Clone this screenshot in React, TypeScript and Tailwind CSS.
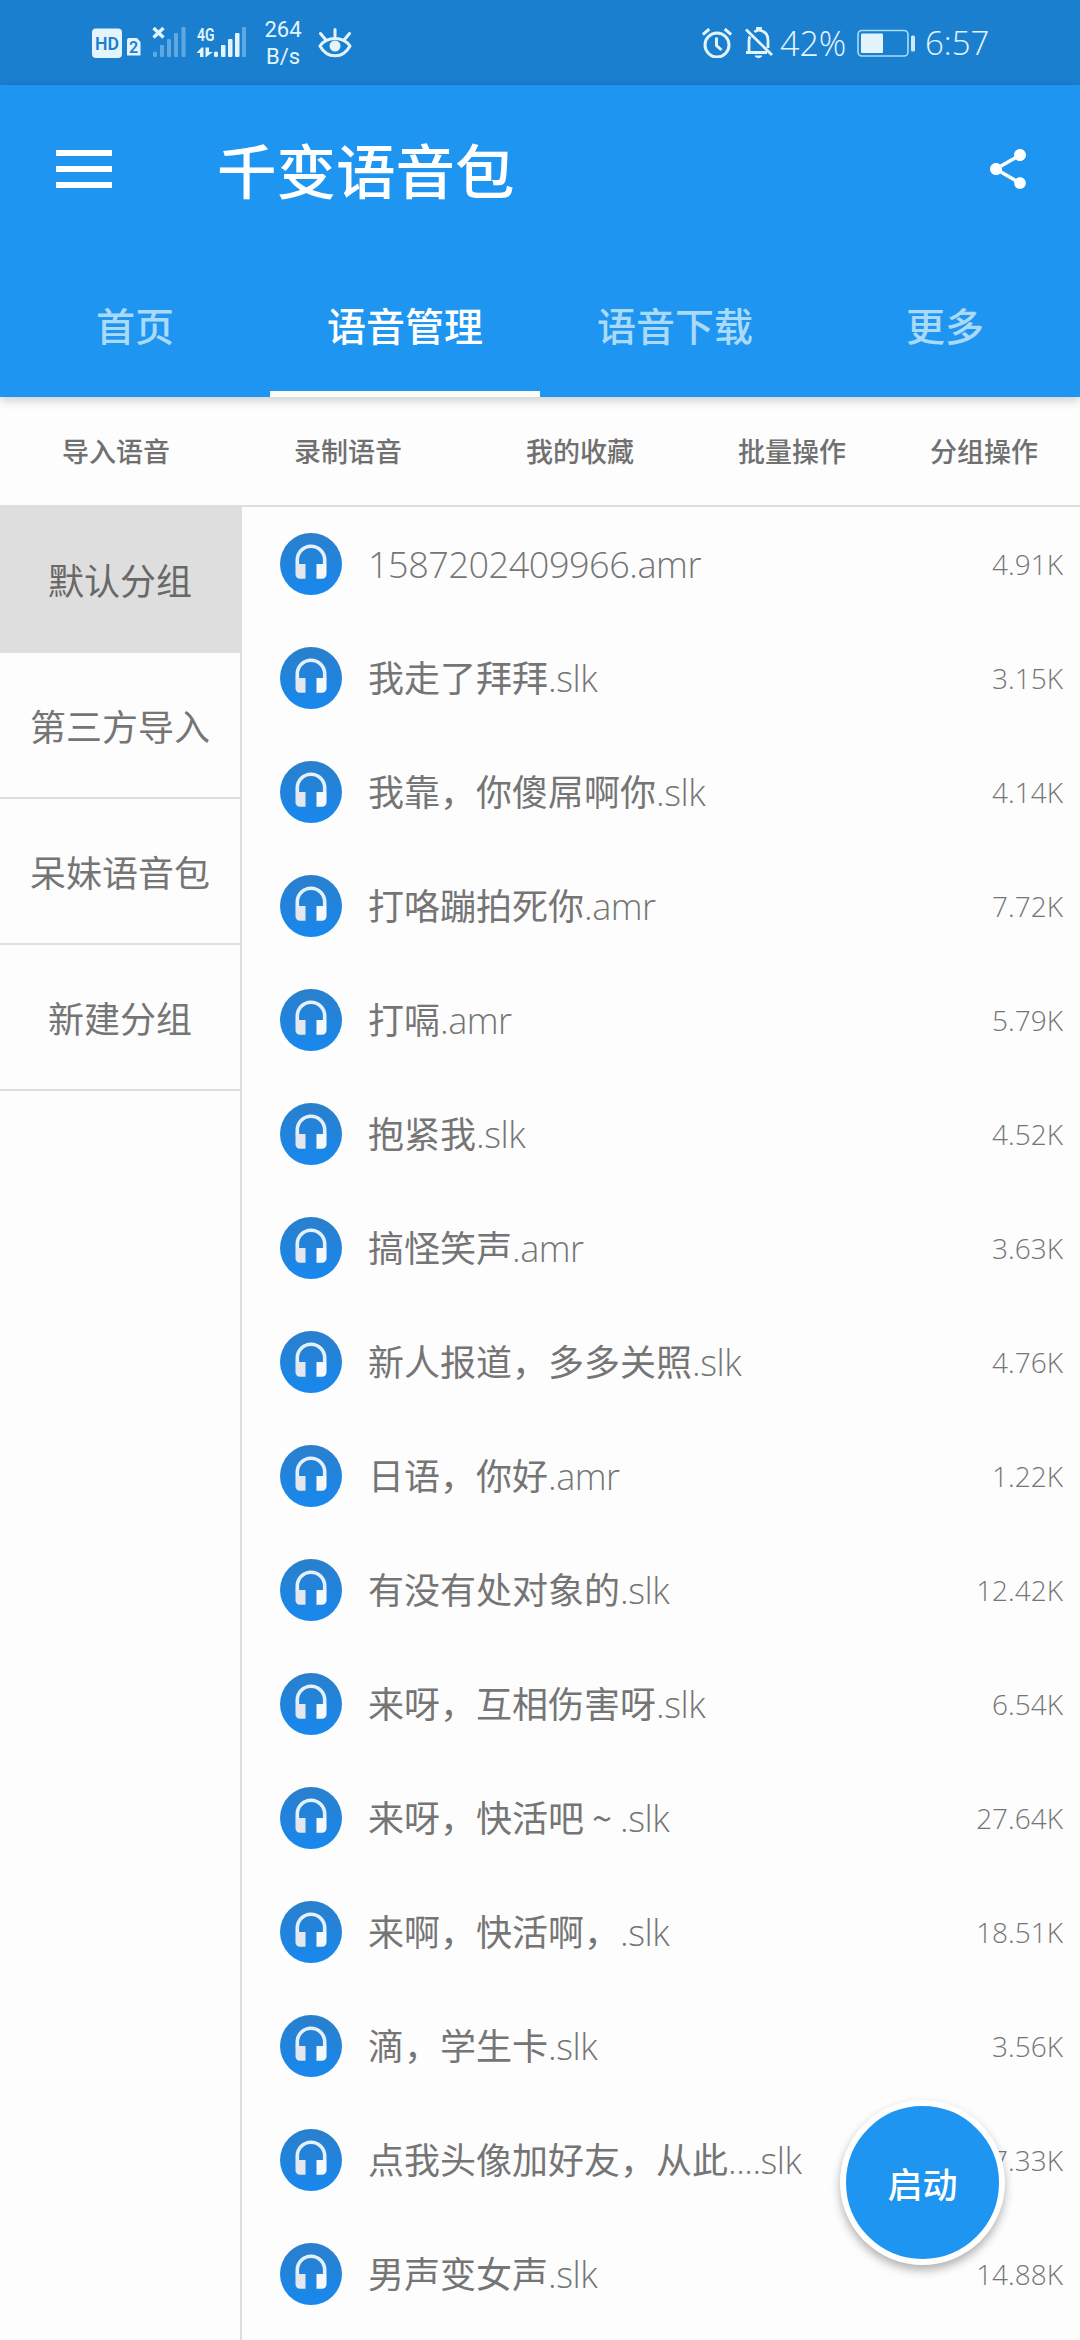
import React from 'react';
import { MdShare } from 'react-icons/md';

interface Voice {
  name: string;
  ext: string;
  size: string;
}

const tabs = ['首页', '语音管理', '语音下载', '更多'];

const actions = [
  { label: '导入语音', width: 'w-[232px]' },
  { label: '录制语音', width: 'w-[232px]' },
  { label: '我的收藏', width: 'w-[232px]' },
  { label: '批量操作', width: 'w-48' },
  { label: '分组操作', width: 'w-48' },
];

const groups = ['默认分组', '第三方导入', '呆妹语音包', '新建分组'];

const voices: Voice[] = [
  { name: '', ext: '1587202409966.amr', size: '4.91K' },
  { name: '我走了拜拜', ext: '.slk', size: '3.15K' },
  { name: '我靠，你傻屌啊你', ext: '.slk', size: '4.14K' },
  { name: '打咯蹦拍死你', ext: '.amr', size: '7.72K' },
  { name: '打嗝', ext: '.amr', size: '5.79K' },
  { name: '抱紧我', ext: '.slk', size: '4.52K' },
  { name: '搞怪笑声', ext: '.amr', size: '3.63K' },
  { name: '新人报道，多多关照', ext: '.slk', size: '4.76K' },
  { name: '日语，你好', ext: '.amr', size: '1.22K' },
  { name: '有没有处对象的', ext: '.slk', size: '12.42K' },
  { name: '来呀，互相伤害呀', ext: '.slk', size: '6.54K' },
  { name: '来呀，快活吧~', ext: '.slk', size: '27.64K' },
  { name: '来啊，快活啊，', ext: '.slk', size: '18.51K' },
  { name: '滴，学生卡', ext: '.slk', size: '3.56K' },
  { name: '点我头像加好友，从此', ext: '....slk', size: '7.33K' },
  { name: '男声变女声', ext: '.slk', size: '14.88K' },
];

const HeadsetIcon = () => (
  <svg viewBox="0 0 62 62" className="size-[62px] shrink-0">
    <defs>
      <linearGradient id="disc" x1="0" y1="0" x2="0" y2="1">
        <stop offset="0" stopColor="#2a7fcb" />
        <stop offset="1" stopColor="#1888ee" />
      </linearGradient>
    </defs>
    <circle cx="31" cy="31" r="31" fill="url(#disc)" />
    <path d="M17.300 31.500V27a13.700 13.700 0 0 1 27.400 0V31.500" fill="none" stroke="#e4f1fc" strokeWidth="3.600" />
    <path d="M15.500 31h10v14.700h-5.500a4.500 4.500 0 0 1-4.500-4.500z" fill="#e4e8ee" />
    <path d="M36.500 31h10v10.200a4.500 4.500 0 0 1-4.500 4.500h-5.500z" fill="#f6f9fc" />
  </svg>
);

const SignalIcons = () => (
  <svg viewBox="0 0 260 86" className="h-[86px] w-[260px]" fill="#e3f4fd">
    <rect x="92" y="28.5" width="30" height="29.5" rx="4" />
    <text x="107" y="50" textAnchor="middle" textLength="24" lengthAdjust="spacingAndGlyphs" fontSize="19" fontWeight="600" fontFamily="Roboto, sans-serif" fill="#1b7fd0">HD</text>
    <path d="M129 38h8l3.500 4v13.500h-13.500v-15.500q0-2 2-2z" />
    <text x="133.500" y="53" textAnchor="middle" fontSize="16" fontWeight="600" fontFamily="Roboto, sans-serif" fill="#1b7fd0">2</text>
    <path d="M153.500 28l10 9.500m0-9.500l-10 9.500" stroke="#e3f4fd" strokeWidth="3.400" />
    <g fill="#5fa9e2">
      <rect x="153" y="51.500" width="4" height="5.500" rx="1.500" />
      <rect x="160" y="45" width="4" height="12" rx="1" />
      <rect x="167" y="39" width="4" height="18" rx="1" />
      <rect x="174" y="33" width="4" height="24" rx="1" />
      <rect x="181.500" y="27" width="4" height="30" rx="1" />
      <rect x="242" y="27" width="4" height="30" rx="1" />
    </g>
    <text x="197" y="41" textLength="17.500" lengthAdjust="spacingAndGlyphs" fontSize="19" fontWeight="600" fontFamily="Roboto, sans-serif">4G</text>
    <path d="M203.500 57V47.500h-2l-5 5.500h3.500v4zM205.500 47.500h3.500v4.500h4l-7.500 5.500z" />
    <rect x="214" y="51.500" width="4" height="5.500" rx="1.500" />
    <rect x="221" y="45" width="4.500" height="12" rx="1" />
    <rect x="228" y="39" width="4.500" height="18" rx="1" />
    <rect x="235" y="33" width="4.500" height="24" rx="1" />
  </svg>
);

const EyeIcon = () => (
  <svg viewBox="0 0 34 30" className="h-[30px] w-[34px]" fill="none" stroke="#e3f4fd" strokeWidth="3" strokeLinecap="round">
    <path d="M2 18C9 8 25 8 32 18C25 31 9 31 2 18z" />
    <path d="M17 1.500v7M2.500 5.500l5 6M31.500 5.500l-5 6" />
    <circle cx="17" cy="18" r="5.500" fill="#e3f4fd" stroke="none" />
  </svg>
);

const AlarmIcon = () => (
  <svg viewBox="0 0 30 30" className="size-[30px]" fill="none" stroke="#e3f4fd" strokeWidth="3">
    <circle cx="15" cy="17" r="12" />
    <path d="M14.500 9.500v8l5 4.500" />
    <path d="M.8 6.500l6.500-5.500M29.200 6.500l-6.500-5.500" />
  </svg>
);

const BellOffIcon = () => (
  <svg viewBox="0 0 30 32" className="h-8 w-[30px]" fill="none" stroke="#e3f4fd" strokeWidth="2.800">
    <path d="M2 2.500l26 25.500" />
    <path d="M2 25.500h21M5 25V13.500q0-2 1-4M10.500 5q1-1 3-1.500V1.500h3v2q7.500 1.500 7.500 9.500v8" />
    <path d="M11 29h7q-3.500 3.500-7 0z" fill="#e3f4fd" strokeWidth="1" />
  </svg>
);

const BatteryIcon = () => (
  <svg viewBox="0 0 60 28" className="h-7 w-[60px] shrink-0">
    <rect x="1" y="1.500" width="50" height="25.500" rx="4" fill="none" stroke="#a9dcf8" strokeWidth="1.600" />
    <rect x="4" y="4.500" width="22" height="19.500" rx="1" fill="#e3f4fd" />
    <rect x="54" y="6.500" width="4" height="16" rx="1.500" fill="#cdeafb" />
  </svg>
);

const StatusBar = () => (
  <div className="flex h-[85px] items-center bg-[#1b7fd0] font-['Open_Sans',sans-serif] text-[#e3f4fd]">
    <SignalIcons />
    <div className="w-[46px] text-center font-['Roboto',sans-serif] text-[22px] leading-[27px]">
      <div>264</div>
      <div>B/s</div>
    </div>
    <div className="ml-3">
      <EyeIcon />
    </div>
    <div className="ml-auto flex items-center pr-[91px] text-[33px] font-light leading-none">
      <AlarmIcon />
      <div className="ml-3">
        <BellOffIcon />
      </div>
      <span className="ml-[6px] w-[77px] whitespace-nowrap text-[34px]">42%</span>
      <BatteryIcon />
      <span className="ml-2 w-[64px] whitespace-nowrap">6:57</span>
    </div>
  </div>
);

const VoiceRow: React.FC<{ voice: Voice }> = ({ voice }) => (
  <div className="flex h-[114px] shrink-0 items-center pl-[38px] pr-[17px]">
    <HeadsetIcon />
    <div className={`ml-[26px] flex flex-1 items-baseline whitespace-nowrap text-[36px] ${voice.name ? 'pb-px' : 'pt-[2px]'}`}>
      <span className="font-['Noto_Sans_CJK_SC',sans-serif] font-normal">
        {voice.name.replace('~', '')}
        {voice.name.endsWith('~') && <span className="inline-block w-[36px] text-center">~</span>}
      </span>
      <span className="tracking-[-0.45px]">{voice.ext}</span>
    </div>
    <span className="pb-px text-[28px]">{voice.size}</span>
  </div>
);

export default function App() {
  return (
    <div className="relative flex h-[2340px] w-[1080px] flex-col overflow-hidden bg-[#fdfdfd] font-['Open_Sans','Noto_Sans_CJK_SC',sans-serif] text-[#757575]">
      <StatusBar />

      <header className="relative z-10 flex h-[312px] shrink-0 flex-col bg-[#1e95f1] text-white shadow-[0_3px_10px_rgba(0,0,0,0.2)]">
        <div className="flex h-[168px] items-center pl-14 pr-12">
          <div className="flex flex-col gap-[10px]">
            <span className="h-[6px] w-14 bg-white" />
            <span className="h-[6px] w-14 bg-white" />
            <span className="h-[6px] w-14 bg-white" />
          </div>
          <h1 className="ml-[105px] flex-1 pb-px font-['Noto_Sans_CJK_SC',sans-serif] text-[59.5px] font-medium leading-none">千变语音包</h1>
          <MdShare size={48} />
        </div>
        <nav className="grid flex-1 grid-cols-4 font-['Noto_Sans_CJK_SC',sans-serif] text-[39px] font-medium">
          {tabs.map((tab, i) => (
            <div
              key={tab}
              className={`flex items-center justify-center border-b-[6px] pt-1 ${i === 1 ? 'border-white' : 'border-transparent text-[#a9dafa]'}`}
            >
              {tab}
            </div>
          ))}
        </nav>
      </header>

      <div className="flex h-[110px] shrink-0 items-center border-b-2 border-[#dedede] font-['Noto_Sans_CJK_SC',sans-serif] text-[27px] font-medium text-[#707070]">
        {actions.map((action) => (
          <div key={action.label} className={`text-center ${action.width}`}>
            {action.label}
          </div>
        ))}
      </div>

      <div className="flex min-h-0 flex-1">
        <aside className="w-[242px] shrink-0 border-r-2 border-[#dedede] font-['Noto_Sans_CJK_SC',sans-serif] text-[36px]">
          {groups.map((group, i) => (
            <div
              key={group}
              className={`flex h-[146px] items-center justify-center border-b-2 border-[#dedede] ${i === 0 ? 'bg-[#dedede] text-[#686868]' : ''}`}
            >
              {group}
            </div>
          ))}
        </aside>
        <main className="flex flex-1 flex-col overflow-hidden font-light">
          {voices.map((voice) => (
            <VoiceRow key={voice.name + voice.ext} voice={voice} />
          ))}
        </main>
      </div>

      <button className="absolute left-[840px] top-[2100px] z-20 flex size-[165px] items-center justify-center rounded-full border-[6px] border-white bg-[#1e95f1] pt-0.5 font-['Noto_Sans_CJK_SC',sans-serif] text-[35px] font-medium text-white shadow-[0_5px_10px_rgba(0,0,0,0.3)]">
        启动
      </button>
    </div>
  );
}
